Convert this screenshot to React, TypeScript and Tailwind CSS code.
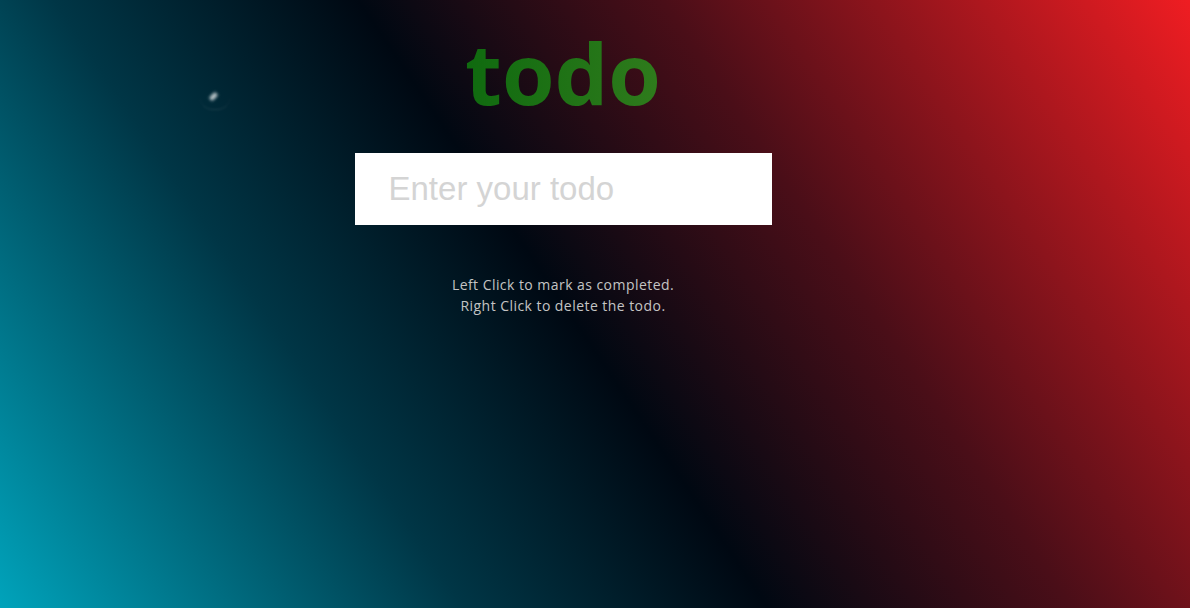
import { useState } from 'react';

export default function App() {
  const [todo, setTodo] = useState('');

  return (
    <div className="relative h-[608px] w-full overflow-hidden bg-[linear-gradient(56deg,#00a3bb_0%,#003646_29%,#000812_48%,#4a0e18_67%,#ef1d22_100%)] font-['Open_Sans',sans-serif]">
      {/* stray sparkle */}
      <div className="absolute left-[209px] top-[94px] h-[5px] w-[9px] -rotate-45 rounded-full bg-white/70 blur-[1.5px]" />
      <div className="absolute left-[200px] top-[84px] h-[26px] w-[30px] rounded-full border-b border-white/10 blur-[1px]" />

      <div className="flex flex-col items-center pr-16 pt-[30px]">
        <h1 className="bg-[linear-gradient(90deg,#0f6a0f,#2f7b1c)] bg-clip-text text-[85px] font-bold leading-[85px] text-transparent">
          todo
        </h1>

        <input
          value={todo}
          onChange={e => setTodo(e.target.value)}
          placeholder="Enter your todo"
          className="mt-[38px] h-[72px] w-[417px] bg-white px-[34px] font-['Liberation_Sans',sans-serif] text-[33px] text-neutral-700 outline-none placeholder:text-[#d4d4d4]"
        />

        <div className="mt-[49px] text-center text-[14px] leading-[21px] tracking-[0.45px] text-[#c4c4c4]">
          <p>Left Click to mark as completed.</p>
          <p>Right Click to delete the todo.</p>
        </div>
      </div>
    </div>
  );
}
